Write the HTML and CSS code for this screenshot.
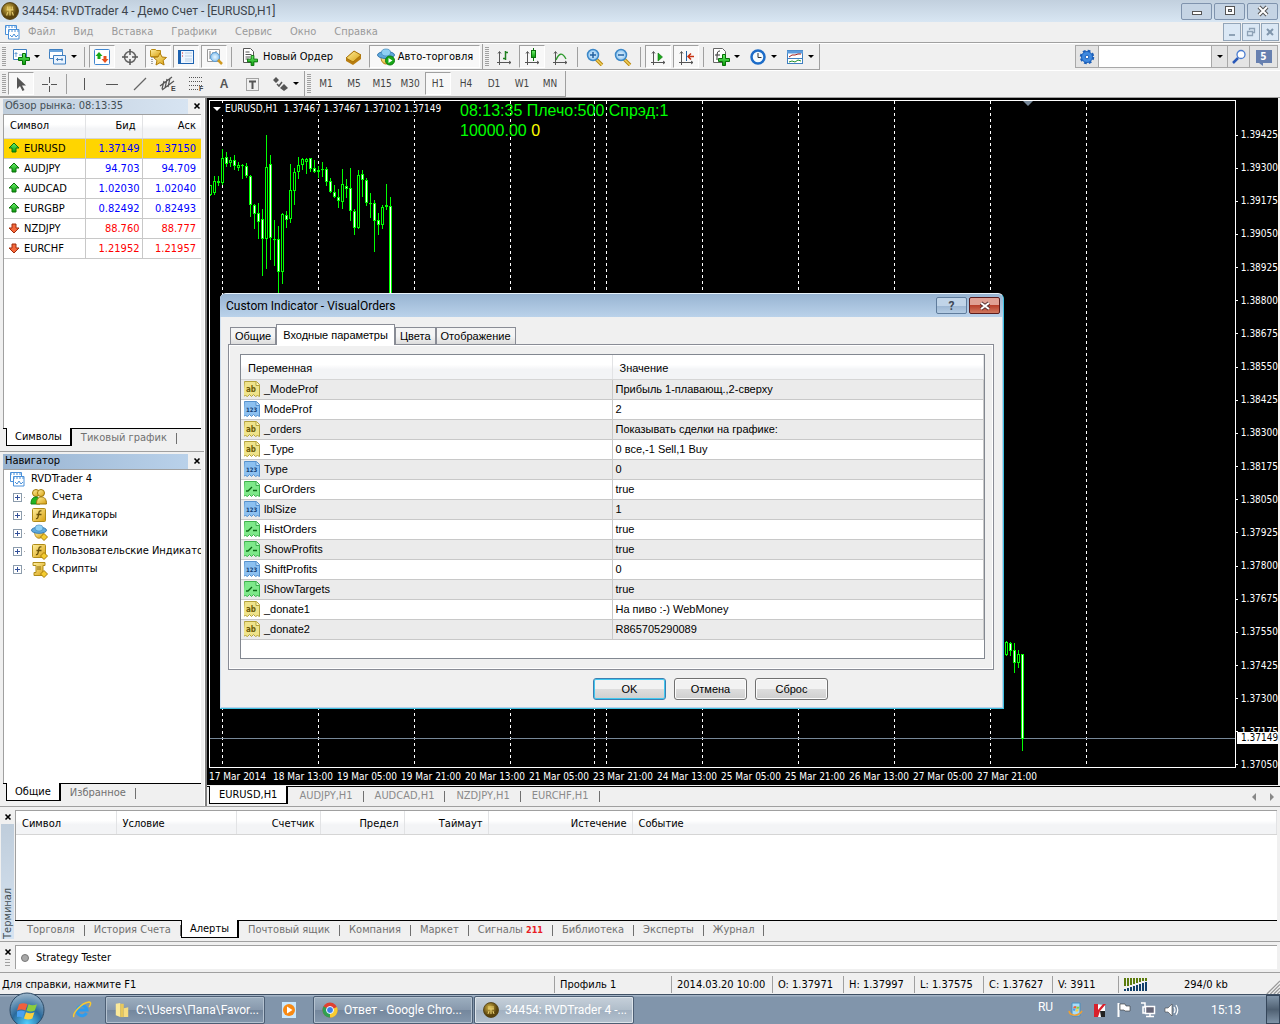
FILE: index.html
```html
<!DOCTYPE html>
<html lang="ru">
<head>
<meta charset="utf-8">
<title>34454: RVDTrader 4 - Демо Счет - [EURUSD,H1]</title>
<link rel="stylesheet" href="styles.css">
</head>
<body>
<svg class="defs" aria-hidden="true">
  <defs>
    <linearGradient id="gGreen" x1="0" y1="0" x2="0" y2="1"><stop offset="0" stop-color="#6df06d"/><stop offset="1" stop-color="#0a9a0a"/></linearGradient>
    <linearGradient id="gGold" x1="0" y1="0" x2="1" y2="1"><stop offset="0" stop-color="#fff0a0"/><stop offset="1" stop-color="#d8a010"/></linearGradient>
    <radialGradient id="gLens"><stop offset="0" stop-color="#e8f6ff"/><stop offset="1" stop-color="#8cc4f0"/></radialGradient>
    <radialGradient id="gCoin" cx=".4" cy=".35"><stop offset="0" stop-color="#d8b84a"/><stop offset="1" stop-color="#5a430c"/></radialGradient>
    <radialGradient id="gOrb" cx=".5" cy=".9" r=".9"><stop offset="0" stop-color="#4fd0ff"/><stop offset=".5" stop-color="#2a6a9c"/><stop offset="1" stop-color="#9fb8cc"/></radialGradient>
  </defs>
  <symbol id="coin" viewBox="0 0 16 16"><circle cx="8" cy="8" r="7.500" fill="url(#gCoin)" stroke="#4d3a0c" stroke-width=".8"/><path d="M6 4v3M10 4v3M5 7h6M8 4v8M6 9l-1 3M10 9l1 3" stroke="#e8cf70" fill="none"/></symbol>
  <symbol id="charts" viewBox="0 0 16 16"><path d="M1.500 1.500h11v9h-11z" fill="#fff" stroke="#4a90d9"/><path d="M1 3h12" stroke="#4a90d9" stroke-dasharray="2 1"/><path d="M4.500 5.500h10.500v9.500H4.500z" fill="#fff" stroke="#4a90d9"/><path d="M4 7h11" stroke="#4a90d9" stroke-dasharray="2 1"/><path d="M6 11l2 2 2-3 2 3 2-2" fill="none" stroke="#4a90d9"/></symbol>
  <symbol id="plus" viewBox="0 0 12 12"><path d="M4.500.5h3v4h4v3h-4v4h-3v-4h-4v-3h4z" fill="url(#gGreen)" stroke="#067006"/></symbol>
  <symbol id="newchart" viewBox="0 0 20 18"><path d="M2.500 1.500h13v10h-13z" fill="#fff" stroke="#3f7fc0"/><path d="M5 4v5M3.500 5.500h3M8 7h5" stroke="#6a9fd4"/><use href="#plus" x="7" y="5" width="12" height="12"/></symbol>
  <symbol id="profiles" viewBox="0 0 20 18"><path d="M1.500 1.500h13v9h-13z" fill="#fff" stroke="#3f7fc0"/><path d="M1.500 3h13" stroke="#6aa4dc" stroke-width="2"/><path d="M5.500 7.500h12v8.500h-12z" fill="#eaf4ff" stroke="#3f7fc0"/><path d="M8 11.500h7M9.500 10v3M14 10v3" stroke="#4a80b8"/></symbol>
  <symbol id="watch" viewBox="0 0 20 18"><rect x="2.500" y="1.500" width="15" height="15" rx="1" fill="#fff" stroke="#3f86d0"/><path d="M7 4l3.500 4H8.500v3H5.500V8H3.500z" fill="#17a817"/><path d="M13 15l-3.500-4h2V8h3v3h2z" fill="#e8501c"/></symbol>
  <symbol id="target" viewBox="0 0 20 18"><circle cx="10" cy="9" r="5.500" fill="none" stroke="#666" stroke-width="1.500"/><path d="M10 1v6M10 11v6M2 9h6M12 9h6" stroke="#555" stroke-width="1.500"/></symbol>
  <symbol id="navstar" viewBox="0 0 20 18"><path d="M2.500 2.500l1-1h4l1 1h4v6h-10z" fill="url(#gGold)" stroke="#b88a10"/><path d="M12 5l2 4 4.500.5-3.400 3 1 4.500-4.100-2.300L8 17l1-4.500-3.500-3L10 9z" fill="url(#gGold)" stroke="#b07c08"/><path d="M4 9v7" stroke="#555" stroke-dasharray="1 1"/></symbol>
  <symbol id="term" viewBox="0 0 20 18"><rect x="2.500" y="2.500" width="15" height="13" fill="#eef6ff" stroke="#1d62b0"/><path d="M4 3v12" stroke="#1d62b0" stroke-width="2"/><path d="M6 5h1M6 8h1" stroke="#e02020"/><path d="M9 5h7M9 8h7M9 11h7M9 13h7" stroke="#bcd0e4"/></symbol>
  <symbol id="tester" viewBox="0 0 20 18"><path d="M3.500 1.500h12v12h-12z" fill="#fff" stroke="#999"/><path d="M6 3v8M9 4v6M12 3v4" stroke="#777"/><circle cx="11" cy="9" r="4.500" fill="url(#gLens)" stroke="#5a9bd4"/><path d="M14 12l4 4" stroke="#d09a20" stroke-width="2.500"/></symbol>
  <symbol id="neworder" viewBox="0 0 20 18"><path d="M2.500.5h7l3 3v11h-10z" fill="#fff" stroke="#555"/><path d="M4.500 4h4M4.500 6.500h6M4.500 9h5M4.500 11h3" stroke="#555"/><use href="#plus" x="6" y="7" width="11" height="11"/></symbol>
  <symbol id="goldbook" viewBox="0 0 20 18"><path d="M2 10l8-7 7 4v4l-8 6-7-4z" fill="#b87d10"/><path d="M2 10l8-7 7 4-8 7z" fill="url(#gGold)" stroke="#a87208"/></symbol>
  <symbol id="expert" viewBox="0 0 20 18"><path d="M5 9c0 4 2 7 5 7s5-3 5-7z" fill="url(#gGold)" stroke="#b08010"/><ellipse cx="10" cy="7" rx="8.500" ry="3.500" fill="#5fa9dc" stroke="#3478b0"/><ellipse cx="10" cy="4.500" rx="4.500" ry="3.500" fill="#8fd0f4" stroke="#3f88bc" stroke-width=".7"/></symbol>
  <symbol id="auto" viewBox="0 0 20 18"><use href="#expert" width="20" height="18"/><circle cx="14" cy="12.500" r="4.500" fill="#18a818" stroke="#0c7c0c"/><path d="M12.500 10v5l4-2.500z" fill="#fff"/></symbol>
  <symbol id="axes" viewBox="0 0 20 18"><path d="M5.500 4v13M3 14.500h14M4 5.500l1.500-2 1.500 2M15 13l2 1.500-2 1.500" fill="none" stroke="#555"/></symbol>
  <symbol id="bars" viewBox="0 0 20 18"><use href="#axes" width="20" height="18"/><path d="M11.500 3v9M9 10.500h2.500M11.500 4.500H14" stroke="#1f7f1f" stroke-width="1.500"/></symbol>
  <symbol id="candle" viewBox="0 0 20 18"><use href="#axes" width="20" height="18"/><path d="M11.500 0v13" stroke="#0a700a"/><rect x="9.500" y="2.500" width="4" height="7" fill="url(#gGreen)" stroke="#0a700a"/></symbol>
  <symbol id="line" viewBox="0 0 20 18"><use href="#axes" width="20" height="18"/><path d="M6 12c3-7 6-8 10-1" fill="none" stroke="#2c9a2c" stroke-width="1.300"/></symbol>
  <symbol id="lens" viewBox="0 0 20 18"><path d="M11 11l6 6" stroke="#b8860b" stroke-width="3.500"/><path d="M11 11l6 6" stroke="#f0d060" stroke-width="1.500"/><circle cx="8" cy="7" r="5.500" fill="url(#gLens)" stroke="#3c88c8" stroke-width="1.500"/></symbol>
  <symbol id="zoomin" viewBox="0 0 20 18"><use href="#lens" width="20" height="18"/><path d="M5 7h6M8 4v6" stroke="#2060a0" stroke-width="1.500"/></symbol>
  <symbol id="zoomout" viewBox="0 0 20 18"><use href="#lens" width="20" height="18"/><path d="M5 7h6" stroke="#2060a0" stroke-width="1.500"/></symbol>
  <symbol id="scroll" viewBox="0 0 20 18"><use href="#axes" width="20" height="18"/><path d="M10 5v8l4.500-4z" fill="#1ca81c" stroke="#0a700a" stroke-width=".6"/></symbol>
  <symbol id="shift" viewBox="0 0 20 18"><use href="#axes" width="20" height="18"/><path d="M10.500 3v10" stroke="#2060a0"/><path d="M12 8.500h6M15 5.500l-3 3 3 3" fill="none" stroke="#c83010" stroke-width="1.500"/></symbol>
  <symbol id="indic" viewBox="0 0 20 18"><path d="M2.500.5h9l3 3v11h-12z" fill="#fff" stroke="#666"/><path d="M9 3c-3 0-3 2-3 9M4 7h5" fill="none" stroke="#333"/><use href="#plus" x="7" y="6" width="12" height="12"/></symbol>
  <symbol id="clock" viewBox="0 0 20 18"><circle cx="10" cy="9" r="6.500" fill="#f4fbff" stroke="#1c6cc8" stroke-width="2.500"/><path d="M10 5v4.500h3.500" fill="none" stroke="#333"/></symbol>
  <symbol id="templ" viewBox="0 0 20 18"><rect x="2.500" y="2.500" width="15" height="13" fill="#fff" stroke="#3f7fc0"/><path d="M2 4h16" stroke="#5c9cdc" stroke-width="3"/><path d="M4 9l3-2h3l3-1h3" fill="none" stroke="#a02020"/><path d="M2 10.500h16" stroke="#3f7fc0"/><path d="M4 14l3-1 3 1 3-2 3 1" fill="none" stroke="#20902c"/></symbol>
  <symbol id="cursor" viewBox="0 0 20 18"><path d="M6 2v12l3-3 2.500 5 2-1-2.500-4.500h4z" fill="#555"/></symbol>
  <symbol id="cross" viewBox="0 0 20 18"><path d="M10.500 2v6M10.500 11v6M3 9.500h6M12 9.500h6" stroke="#555"/></symbol>
  <symbol id="vline" viewBox="0 0 20 18"><path d="M10.500 3v12" stroke="#555"/></symbol>
  <symbol id="hline" viewBox="0 0 20 18"><path d="M4 9.500h12" stroke="#555"/></symbol>
  <symbol id="trend" viewBox="0 0 20 18"><path d="M4 15L16 3" stroke="#666" stroke-width="1.200"/></symbol>
  <symbol id="channel" viewBox="0 0 20 18"><path d="M2 11L14 2M4 15L16 6M6 6l-2 8M9 4L7 13M12 3l-2 9" stroke="#555" stroke-width="1.200"/><text x="13" y="16" class="icon-letter">E</text></symbol>
  <symbol id="fibo" viewBox="0 0 20 18"><path d="M3 2.500h14M3 6.500h14M3 10.500h14M3 14.500h9" stroke="#555" stroke-dasharray="1 1"/><text x="13" y="16" class="icon-letter">F</text></symbol>
  <symbol id="label" viewBox="0 0 20 18"><rect x="4.500" y="3.500" width="12" height="12" fill="none" stroke="#555" stroke-dasharray="1 1"/><path d="M7 6.500h7M10.500 6v8" stroke="#555" stroke-width="2"/></symbol>
  <symbol id="arrows" viewBox="0 0 20 18"><path d="M3 5l3-3 3 3-3 3zM10 13l4-4 4 4-4 3z" fill="#555"/><path d="M7 9l2 2 3-4" fill="none" stroke="#555" stroke-width="1.500"/></symbol>
  <symbol id="gear" viewBox="0 0 16 16"><circle cx="8" cy="8" r="6" fill="none" stroke="#1c5fb8" stroke-width="2.500" stroke-dasharray="2.700 2"/><circle cx="8" cy="8" r="5.500" fill="#3f8ae0" stroke="#1c5fb8"/><circle cx="8" cy="8" r="1.800" fill="#fff" stroke="#1c5fb8"/></symbol>
  <symbol id="find" viewBox="0 0 16 16"><circle cx="10" cy="5.500" r="4" fill="#fff" stroke="#4a7cd0" stroke-width="1.300"/><path d="M7 9l-5 5" stroke="#2858b8" stroke-width="2.500"/></symbol>
  <symbol id="up" viewBox="0 0 12 12"><path d="M6 1l5 5H8v4H4V6H1z" fill="url(#gGreen)" stroke="#0a700a"/></symbol>
  <symbol id="down" viewBox="0 0 12 12"><path d="M6 11L1 6h3V2h4v4h3z" fill="#f4683c" stroke="#a02c0c"/></symbol>
  <symbol id="x" viewBox="0 0 8 8"><path d="M1.500 1.500l5 5M6.500 1.500l-5 5" stroke="#000" stroke-width="1.600"/></symbol>
  <symbol id="users" viewBox="0 0 18 18"><circle cx="6" cy="5" r="3.500" fill="url(#gGold)" stroke="#a07808"/><path d="M1 16c0-5 2-7 5-7s4 2 4 7z" fill="#22b422" stroke="#108010"/><circle cx="11" cy="5" r="3.500" fill="url(#gGold)" stroke="#a07808"/><path d="M6.500 16c0-5 2-7 5-7s5 2 5 7z" fill="url(#gGold)" stroke="#a07808"/></symbol>
  <symbol id="func" viewBox="0 0 18 18"><rect x="2.500" y="2.500" width="13" height="13" rx="1" fill="url(#gGold)" stroke="#b08c18"/><path d="M11.500 5c-3-1-2.500 2-3 4s-.5 4-2.500 3.500M6.500 8.500h5" fill="none" stroke="#6a5208" stroke-width="1.300"/></symbol>
  <symbol id="gem" viewBox="0 0 8 8"><path d="M4 .5L7.500 4 4 7.500.5 4z" fill="#f4cc30" stroke="#a87c08"/></symbol>
  <symbol id="advisor" viewBox="0 0 18 18"><use href="#expert" width="18" height="16"/><use href="#gem" x="10" y="9" width="8" height="8"/></symbol>
  <symbol id="funcc" viewBox="0 0 18 18"><use href="#func" width="18" height="18"/><use href="#gem" x="10" y="10" width="8" height="8"/></symbol>
  <symbol id="script" viewBox="0 0 18 18"><path d="M3 2.500h12v3h-2v7h2v3H4v-3h2v-7H3z" fill="url(#gGold)" stroke="#b08c18"/><path d="M7 7h4M7 9h4" stroke="#8a6c10"/><use href="#gem" x="10" y="10" width="8" height="8"/></symbol>
  <symbol id="pab" viewBox="0 0 16 16"><path d="M.5.500h12l3 3v12l-2-1-2 1-2-2-2 2-2-2-2 2-2-1-3 1z" fill="#efe38a" stroke="#b4a23c"/><path d="M12 .5v4h3.500" fill="#fff8c0" stroke="#b4a23c"/><text x="2" y="11" class="par-letter par-ab">ab</text></symbol>
  <symbol id="p123" viewBox="0 0 16 16"><path d="M.5.500h12l3 3v12l-2-1-2 1-2-2-2 2-2-2-2 2-2-1-3 1z" fill="#8cc0f0" stroke="#5590cc"/><path d="M12 .5v4h3.500" fill="#c8e4ff" stroke="#5590cc"/><text x="2" y="11" class="par-letter par-num">123</text></symbol>
  <symbol id="pbool" viewBox="0 0 16 16"><path d="M.5.500h12l3 3v12l-2-1-2 1-2-2-2 2-2-2-2 2-2-1-3 1z" fill="#7ee88a" stroke="#3cb04c"/><path d="M12 .5v4h3.500" fill="#c8ffd0" stroke="#3cb04c"/><path d="M2 10h2l4-4M9 9.500h4" fill="none" stroke="#0c6c18" stroke-width="1.300"/></symbol>
  <symbol id="flag" viewBox="0 0 10 10"><path d="M1 2q2-1 4 0l-1 3q-2-1-4 0z" fill="#f0603c"/><path d="M5.500 2q2 1 4 0l-1 3q-2 1-4 0z" fill="#8ccc3c"/><path d="M0 5.500q2-1 3.800 0l-1 3q-1.800-1-3.800 0z" fill="#4aa0f0"/><path d="M4.300 5.800q2 1 4 0l-1 3q-2 1-4 0z" fill="#fcd03c"/></symbol>
</svg>

<header class="titlebar">
  <svg class="i18"><use href="#coin"/></svg>
  <h1>34454: RVDTrader 4 - Демо Счет - [EURUSD,H1]</h1>
  <div class="winbtns">
    <button aria-label="Свернуть"><svg viewBox="0 0 12 12"><rect x="1.500" y="6.500" width="9" height="3" fill="#fff" stroke="#555"/></svg></button>
    <button aria-label="Развернуть"><svg viewBox="0 0 12 12"><rect x="1.500" y="1.500" width="9" height="8" fill="#fff" stroke="#555"/><rect x="4.500" y="4.500" width="3" height="2" fill="#b8c8d8" stroke="#555"/></svg></button>
    <button aria-label="Закрыть"><svg viewBox="0 0 12 12"><path d="M2 2l8 8M10 2l-8 8" stroke="#555" stroke-width="4"/><path d="M2 2l8 8M10 2l-8 8" stroke="#fff" stroke-width="2"/></svg></button>
  </div>
</header>

<nav class="menubar">
  <svg class="i16"><use href="#charts"/></svg>
  <button>Файл</button><button>Вид</button><button>Вставка</button><button>Графики</button><button>Сервис</button><button>Окно</button><button>Справка</button>
  <div class="mdibtns">
    <button aria-label="Свернуть окно"><svg viewBox="0 0 10 10"><path d="M2 8h6" stroke="#8ea2b6" stroke-width="2"/></svg></button>
    <button aria-label="Восстановить окно"><svg viewBox="0 0 10 10"><path d="M3.500 3V1.500h5v4H7M1.500 4.500h5v4h-5z" fill="none" stroke="#8ea2b6" stroke-width="1.300"/></svg></button>
    <button aria-label="Закрыть окно"><svg viewBox="0 0 10 10"><path d="M2 2l6 6M8 2L2 8" stroke="#8096ac" stroke-width="2"/></svg></button>
  </div>
</nav>

<div class="toolrow">
  <div class="toolbar">
    <i class="grip"></i>
    <button class="tb drop" aria-label="Новый график"><svg><use href="#newchart"/></svg></button>
    <button class="tb drop" aria-label="Профили"><svg><use href="#profiles"/></svg></button>
    <i class="sep"></i>
    <button class="tb on" aria-label="Обзор рынка"><svg><use href="#watch"/></svg></button>
    <button class="tb" aria-label="Окно данных"><svg><use href="#target"/></svg></button>
    <button class="tb on" aria-label="Навигатор"><svg><use href="#navstar"/></svg></button>
    <button class="tb on" aria-label="Терминал"><svg><use href="#term"/></svg></button>
    <button class="tb on" aria-label="Тестер стратегий"><svg><use href="#tester"/></svg></button>
    <i class="sep"></i>
    <button class="tb order"><svg><use href="#neworder"/></svg>Новый Ордер</button>
    <button class="tb" aria-label="MetaEditor"><svg><use href="#goldbook"/></svg></button>
    <button class="tb on autotrade"><svg><use href="#auto"/></svg>Авто-торговля</button>
  </div>
  <div class="toolbar">
    <i class="grip"></i>
    <button class="tb" aria-label="Бары"><svg><use href="#bars"/></svg></button>
    <button class="tb on" aria-label="Свечи"><svg><use href="#candle"/></svg></button>
    <button class="tb" aria-label="Линия"><svg><use href="#line"/></svg></button>
    <i class="sep"></i>
    <button class="tb" aria-label="Увеличить"><svg><use href="#zoomin"/></svg></button>
    <button class="tb" aria-label="Уменьшить"><svg><use href="#zoomout"/></svg></button>
    <i class="sep"></i>
    <button class="tb on" aria-label="Автопрокрутка"><svg><use href="#scroll"/></svg></button>
    <button class="tb on" aria-label="Сдвиг графика"><svg><use href="#shift"/></svg></button>
    <i class="sep"></i>
    <button class="tb drop" aria-label="Индикаторы"><svg><use href="#indic"/></svg></button>
    <button class="tb drop" aria-label="Периоды"><svg><use href="#clock"/></svg></button>
    <button class="tb drop" aria-label="Шаблоны"><svg><use href="#templ"/></svg></button>
  </div>
  <form class="search">
    <button type="button" aria-label="Настройки"><svg class="i16"><use href="#gear"/></svg></button>
    <input type="text" aria-label="Поиск">
    <button type="button" class="arrow" aria-label="История поиска"></button>
    <button type="button" aria-label="Найти"><svg class="i16"><use href="#find"/></svg></button>
    <button type="button" class="msgs" aria-label="Сообщения"><span>5</span></button>
  </form>
</div>

<div class="toolrow">
  <div class="toolbar">
    <i class="grip"></i>
    <button class="tb on" aria-label="Курсор"><svg><use href="#cursor"/></svg></button>
    <button class="tb" aria-label="Перекрестие"><svg><use href="#cross"/></svg></button>
    <i class="sep"></i>
    <button class="tb" aria-label="Вертикальная линия"><svg><use href="#vline"/></svg></button>
    <button class="tb" aria-label="Горизонтальная линия"><svg><use href="#hline"/></svg></button>
    <button class="tb" aria-label="Трендовая линия"><svg><use href="#trend"/></svg></button>
    <button class="tb" aria-label="Канал"><svg><use href="#channel"/></svg></button>
    <button class="tb" aria-label="Фибоначчи"><svg><use href="#fibo"/></svg></button>
    <button class="tb letter">A</button>
    <button class="tb" aria-label="Метка"><svg><use href="#label"/></svg></button>
    <button class="tb drop" aria-label="Стрелки"><svg><use href="#arrows"/></svg></button>
  </div>
  <div class="toolbar periods">
    <i class="grip"></i>
    <button class="tb">M1</button><button class="tb">M5</button><button class="tb">M15</button><button class="tb">M30</button><button class="tb on">H1</button><button class="tb">H4</button><button class="tb">D1</button><button class="tb">W1</button><button class="tb">MN</button>
  </div>
</div>

<main class="workspace">
  <aside class="sidebar">
    <section class="panel market">
      <header class="caption idle"><h2>Обзор рынка: 08:13:35</h2><button class="close" aria-label="Закрыть"><svg><use href="#x"/></svg></button></header>
      <div class="panel-body">
        <table class="quotes">
          <colgroup><col class="c-sym"><col class="c-bid"><col></colgroup>
          <thead><tr><th>Символ</th><th>Бид</th><th>Аск</th></tr></thead>
          <tbody>
            <tr class="sel"><td><svg><use href="#up"/></svg>EURUSD</td><td>1.37149</td><td>1.37150</td></tr>
            <tr><td><svg><use href="#up"/></svg>AUDJPY</td><td>94.703</td><td>94.709</td></tr>
            <tr><td><svg><use href="#up"/></svg>AUDCAD</td><td>1.02030</td><td>1.02040</td></tr>
            <tr><td><svg><use href="#up"/></svg>EURGBP</td><td>0.82492</td><td>0.82493</td></tr>
            <tr class="fall"><td><svg><use href="#down"/></svg>NZDJPY</td><td>88.760</td><td>88.777</td></tr>
            <tr class="fall"><td><svg><use href="#down"/></svg>EURCHF</td><td>1.21952</td><td>1.21957</td></tr>
          </tbody>
        </table>
      </div>
      <div class="tabs"><button class="active">Символы</button><button>Тиковый график</button></div>
    </section>
    <section class="panel navigator">
      <header class="caption"><h2>Навигатор</h2><button class="close" aria-label="Закрыть"><svg><use href="#x"/></svg></button></header>
      <div class="panel-body">
        <ul class="tree">
          <li class="root"><svg><use href="#charts"/></svg>RVDTrader 4</li>
          <li><b></b><svg><use href="#users"/></svg>Счета</li>
          <li><b></b><svg><use href="#func"/></svg>Индикаторы</li>
          <li><b></b><svg><use href="#advisor"/></svg>Советники</li>
          <li><b></b><svg><use href="#funcc"/></svg>Пользовательские Индикаторы</li>
          <li><b></b><svg><use href="#script"/></svg>Скрипты</li>
        </ul>
      </div>
      <div class="tabs"><button class="active">Общие</button><button>Избранное</button></div>
    </section>
  </aside>

  <section class="chart-window">
    <div class="chart">
      <div class="plot">
        <svg class="candles" aria-label="EURUSD,H1"></svg>
        <p class="ohlc"><i></i>EURUSD,H1&nbsp; 1.37467 1.37467 1.37102 1.37149</p>
        <p class="account">08:13:35 Плечо:500 Спрэд:1<br>10000.00 <em>0</em></p>
      </div>
      <ol class="prices">
        <li>1.39425</li><li>1.39300</li><li>1.39175</li><li>1.39050</li><li>1.38925</li><li>1.38800</li><li>1.38675</li><li>1.38550</li><li>1.38425</li><li>1.38300</li><li>1.38175</li><li>1.38050</li><li>1.37925</li><li>1.37800</li><li>1.37675</li><li>1.37550</li><li>1.37425</li><li>1.37300</li><li>1.37175</li><li>1.37050</li>
      </ol>
      <ol class="times">
        <li>17 Mar 2014</li><li>18 Mar 13:00</li><li>19 Mar 05:00</li><li>19 Mar 21:00</li><li>20 Mar 13:00</li><li>21 Mar 05:00</li><li>23 Mar 21:00</li><li>24 Mar 13:00</li><li>25 Mar 05:00</li><li>25 Mar 21:00</li><li>26 Mar 13:00</li><li>27 Mar 05:00</li><li>27 Mar 21:00</li>
      </ol>
      <span class="last-price">1.37149</span>
    </div>
    <div class="tabs chart-tabs"><button class="active">EURUSD,H1</button><button>AUDJPY,H1</button><button>AUDCAD,H1</button><button>NZDJPY,H1</button><button>EURCHF,H1</button><span class="scrollers"><button aria-label="Назад" class="prev"></button><button aria-label="Вперед" class="next"></button></span></div>
  </section>
</main>

<section class="terminal">
  <div class="rail"><button class="close" aria-label="Закрыть"><svg><use href="#x"/></svg></button><h2>Терминал</h2></div>
  <div class="terminal-main">
    <div class="terminal-body">
      <table class="alerts">
        <colgroup><col class="w100"><col class="w120"><col class="w84"><col class="w84"><col class="w84"><col class="w144"><col></colgroup>
        <thead><tr><th>Символ</th><th>Условие</th><th class="r">Счетчик</th><th class="r">Предел</th><th class="r">Таймаут</th><th class="r">Истечение</th><th>Событие</th></tr></thead>
      </table>
    </div>
    <div class="tabs"><button>Торговля</button><button>История Счета</button><button class="active">Алерты</button><button>Почтовый ящик</button><button>Компания</button><button>Маркет</button><button>Сигналы <small>211</small></button><button>Библиотека</button><button>Эксперты</button><button>Журнал</button></div>
  </div>
</section>

<section class="tester">
  <div class="rail"><button class="close" aria-label="Закрыть"><svg><use href="#x"/></svg></button><i></i></div>
  <h2><span class="dot"></span>Strategy Tester</h2>
</section>

<footer class="status">
  <span class="help">Для справки, нажмите F1</span>
  <span class="s-profile">Профиль 1</span><span class="s-time">2014.03.20 10:00</span><span class="s-o">O: 1.37971</span><span class="s-o">H: 1.37997</span><span class="s-l">L: 1.37575</span><span class="s-l">C: 1.37627</span><span class="s-v">V: 3911</span>
  <span class="traffic"><svg viewBox="0 0 24 13"><path d="M1 0v8M4 0v8M7 0v7M10 0v6M13 0v5M16 0v4M19 0v3M22 0v3" stroke="#5c7c0c" stroke-width="2"/><path d="M1 11v2M4 10v3M7 9v4M10 8v5M13 7v6M16 6v7M19 5v8M22 4v9" stroke="#12406a" stroke-width="2"/></svg>294/0 kb</span>
  <svg class="sizer" viewBox="0 0 16 16"><path d="M1 16L16 1M5 16L16 5M9 16l7-7M13 16l3-3" stroke="#999" stroke-width="1.500"/></svg>
</footer>

<footer class="taskbar">
  <button class="start" aria-label="Пуск"><svg viewBox="0 0 36 36"><circle cx="18" cy="18" r="17" fill="url(#gOrb)" stroke="#2c4a66"/><use href="#flag" x="8" y="8" width="21" height="21"/></svg></button>
  <button class="quick ie" aria-label="Internet Explorer"><svg viewBox="0 0 20 20"><path d="M14.500 13a5 5 0 1 1 .5-3H6" fill="none" stroke="#2c9cf0" stroke-width="3"/><path d="M2 17C0 14 9 3 17 2c3 0 1 4 0 5" fill="none" stroke="#f8c830" stroke-width="1.500"/></svg></button>
  <button class="task"><svg class="i16" viewBox="0 0 16 18"><path d="M1 2l5-1v16l-5-2z" fill="#fbe99a"/><path d="M6 2h4v15H6z" fill="#e8c85c"/><path d="M10 7l5-1v11h-5z" fill="#f6dc80"/></svg>C:\Users\Папа\Favor...</button>
  <button class="quick media" aria-label="Проигрыватель"><svg viewBox="0 0 20 20"><path d="M3 2h14v16H3z" fill="#c8e8ff"/><circle cx="10" cy="10" r="6" fill="#f88a14"/><path d="M8 6.500v7l5.500-3.500z" fill="#fff"/></svg></button>
  <button class="task"><svg class="i16" viewBox="0 0 16 16"><circle cx="8" cy="8" r="7.500" fill="#e04030"/><path d="M8 8L1.500 4.300A7.500 7.500 0 0 0 8 15.500z" fill="#30a050"/><path d="M8 8l7-3a7.500 7.500 0 0 1-7 10.500z" fill="#f8cc30"/><circle cx="8" cy="8" r="3.500" fill="#3c80e8" stroke="#fff"/></svg>Ответ - Google Chro...</button>
  <button class="task current"><svg class="i16"><use href="#coin"/></svg>34454: RVDTrader 4 -...</button>
  <div class="tray">
    <span class="lang">RU</span>
    <svg viewBox="0 0 16 16"><path d="M4 1h8v13H4z" fill="#a8dcf8" stroke="#4890c0"/><use href="#flag" x="5" y="3" width="7" height="7"/><path d="M1 9c1 5 9 6 13 0" fill="none" stroke="#f0a030" stroke-width="1.500"/></svg>
    <svg viewBox="0 0 16 16"><path d="M2 2l11 1v12H2z" fill="#fff"/><path d="M2 2h4v6l5-6h3L8 9l-2 6H2z" fill="#d8202c"/><path d="M8 9h5v6H9z" fill="#222"/></svg>
    <svg viewBox="0 0 16 16"><path d="M2.500 1v14" stroke="#fff" stroke-width="2"/><path d="M4 2h5l1 2h4v5H9L8 8H4z" fill="#fff" stroke="#333" stroke-width=".6"/></svg>
    <svg viewBox="0 0 16 16"><path d="M5.500 4.500h9v7h-9zM10 12v2M6 14.500h8" fill="#667" stroke="#fff" stroke-width="1.500"/><path d="M1 1h4v4H3v6h2" fill="none" stroke="#fff" stroke-width="1.500"/></svg>
    <svg viewBox="0 0 16 16"><path d="M1 6h3l4-4v12l-4-4H1z" fill="#fff" stroke="#444" stroke-width=".6"/><path d="M10 5q2 3 0 6M12 3q3.500 5 0 10" fill="none" stroke="#fff" stroke-width="1.200"/></svg>
    <time>15:13</time>
  </div>
  <button class="desktop" aria-label="Показать рабочий стол"></button>
</footer>

<div class="dialog" role="dialog" aria-label="Custom Indicator - VisualOrders">
  <header><h2>Custom Indicator - VisualOrders</h2>
    <button class="d-help" aria-label="Справка">?</button>
    <button class="d-close" aria-label="Закрыть"><svg viewBox="0 0 12 12"><path d="M2 3l8 6M10 3l-8 6" stroke="#5a3030" stroke-width="4"/><path d="M2 3l8 6M10 3l-8 6" stroke="#fff" stroke-width="2"/></svg></button>
  </header>
  <div class="d-tabs"><button>Общие</button><button class="active">Входные параметры</button><button>Цвета</button><button>Отображение</button></div>
  <div class="d-page">
    <div class="d-list">
      <table>
        <colgroup><col class="w371"><col></colgroup>
        <thead><tr><th>Переменная</th><th>Значение</th></tr></thead>
        <tbody>
          <tr><td><svg><use href="#pab"/></svg>_ModeProf</td><td>Прибыль 1-плавающ.,2-сверху</td></tr>
          <tr><td><svg><use href="#p123"/></svg>ModeProf</td><td>2</td></tr>
          <tr><td><svg><use href="#pab"/></svg>_orders</td><td>Показывать сделки на графике:</td></tr>
          <tr><td><svg><use href="#pab"/></svg>_Type</td><td>0 все,-1 Sell,1 Buy</td></tr>
          <tr><td><svg><use href="#p123"/></svg>Type</td><td>0</td></tr>
          <tr><td><svg><use href="#pbool"/></svg>CurOrders</td><td>true</td></tr>
          <tr><td><svg><use href="#p123"/></svg>lblSize</td><td>1</td></tr>
          <tr><td><svg><use href="#pbool"/></svg>HistOrders</td><td>true</td></tr>
          <tr><td><svg><use href="#pbool"/></svg>ShowProfits</td><td>true</td></tr>
          <tr><td><svg><use href="#p123"/></svg>ShiftProfits</td><td>0</td></tr>
          <tr><td><svg><use href="#pbool"/></svg>lShowTargets</td><td>true</td></tr>
          <tr><td><svg><use href="#pab"/></svg>_donate1</td><td>На пиво :-) WebMoney</td></tr>
          <tr><td><svg><use href="#pab"/></svg>_donate2</td><td>R865705290089</td></tr>
        </tbody>
      </table>
    </div>
  </div>
  <div class="d-buttons"><button class="default">OK</button><button>Отмена</button><button>Сброс</button></div>
</div>
<script src="chart.js"></script>
</body>
</html>
```

FILE: styles.css
```css
* { box-sizing: border-box; }
body {
  margin: 0;
  min-height: 100vh;
  display: flex;
  flex-direction: column;
  position: relative;
  background: #f0f0f0;
  color: #000;
  font: 11px/14px "DejaVu Sans Condensed", "DejaVu Sans", sans-serif;
}
h1, h2, p, ul, ol { margin: 0; padding: 0; font: inherit; }
ul, ol { list-style: none; }
button { font: inherit; color: inherit; padding: 0; border: 0; background: none; white-space: nowrap; }
table { border-collapse: collapse; table-layout: fixed; width: 100%; }
th, td { font-weight: normal; padding: 0; white-space: nowrap; overflow: hidden; }
svg { display: block; flex: none; }
.defs { position: absolute; width: 0; height: 0; }
.i16 { width: 16px; height: 16px; }
.i18 { width: 18px; height: 18px; }

.titlebar {
  display: flex;
  align-items: center;
  height: 22px;
  padding: 0 2px 0 1px;
  gap: 3px;
  background: linear-gradient(#c2d0de, #d8e6f3);
  color: #3c444c;
  font: 12px/16px Roboto, sans-serif;
}
.titlebar h1 { flex: 1; }
.winbtns { display: flex; gap: 2px; }
.winbtns button {
  width: 31px;
  height: 17px;
  display: grid;
  place-items: center;
  border: 1px solid #7f93ad;
  border-radius: 2px;
  background: #c5d4e4;
}
.winbtns svg { width: 12px; height: 12px; }

.menubar {
  display: flex;
  align-items: center;
  height: 21px;
  padding: 0 1px 0 4px;
  border-bottom: 1px solid #a0a0a0;
  color: #9a9a9a;
}
.menubar > button { margin-left: 3px; padding: 0 5px; }
.menubar > button + button { margin-left: 8px; }
.mdibtns { display: flex; gap: 1px; margin-left: auto; }
.mdibtns button {
  width: 18px;
  height: 18px;
  display: grid;
  place-items: center;
  border: 1px solid #93a5b8;
  background: #dbe8f5;
}
.mdibtns svg { width: 10px; height: 10px; }

.toolrow { display: flex; height: 27px; border-top: 1px solid #fff; }
.toolbar {
  display: flex;
  align-items: center;
  gap: 2px;
  padding: 0 2px;
  border-right: 1px solid #a0a0a0;
  border-bottom: 1px solid #a0a0a0;
}
.grip {
  width: 4px;
  height: 20px;
  background: repeating-linear-gradient(#a0a0a0 0 1px, #f0f0f0 1px 2px);
}
.sep { width: 1px; height: 20px; margin: 0 2px; background: #a0a0a0; }
.tb {
  width: 26px;
  height: 23px;
  display: flex;
  align-items: center;
  justify-content: center;
  border: 1px solid transparent;
  flex: none;
}
.tb svg { width: 20px; height: 18px; }
.tb.on { border-color: #a0a0a0 #fff #fff #a0a0a0; background: #f8f8f8; }
.tb.drop { width: 35px; gap: 3px; }
.tb.drop::after, .arrow::after { content: ""; border: 3px solid transparent; border-top-color: #000; border-bottom: 0; }
.order, .autotrade { gap: 2px; font-size: 11px; }
.order { width: 103px; justify-content: flex-start; padding-left: 4px; }
.autotrade { width: 111px; }
.letter { font: bold 12px/16px "Liberation Sans", sans-serif; color: #555; }
.icon-letter { font: bold 7px "Liberation Sans", sans-serif; fill: #444; }
.periods { color: #444; font-size: 10px; }

.search {
  display: flex;
  width: 203px;
  height: 23px;
  margin: 1px 2px 0 auto;
  border: 1px solid #a8a8a8;
  background: #e4e4e4;
}
.search button { width: 22px; display: grid; place-items: center; border-left: 1px solid #a8a8a8; }
.search button:first-child { border-left: 0; }
.search input { flex: 1; min-width: 0; border: 0; border-left: 1px solid #a8a8a8; background: #fff; }
.search .arrow { width: 16px; }
.search .msgs { width: 28px; }
.msgs span { position: relative; width: 16px; height: 13px; background: #6780b0; color: #fff; font: bold 10px/13px "DejaVu Sans Condensed", sans-serif; }
.msgs span::after { content: ""; position: absolute; left: 3px; top: 13px; border: solid transparent; border-width: 3px 0 0 4px; border-top-color: #6780b0; }

.workspace { flex: 1; display: flex; min-height: 0; border-top: 1px solid #a0a0a0; }
.sidebar { width: 205px; flex: none; display: flex; flex-direction: column; border-right: 1px solid #fff; }
.panel { display: flex; flex-direction: column; padding: 1px 3px 4px; }
.market { height: 354px; border-bottom: 1px solid #a0a0a0; }
.navigator { flex: 1; padding-top: 2px; }
.caption { display: flex; height: 15px; }
.caption h2 { flex: 1; padding-left: 2px; background: linear-gradient(90deg, #99b4d1, #b9d1ea); }
.caption.idle h2 { background: linear-gradient(90deg, #bfcddb, #d7e4f2); color: #434e54; }
.close { width: 14px; height: 14px; display: grid; place-items: center; }
.caption .close { width: 13px; justify-items: end; }
.close svg { width: 8px; height: 8px; }
.panel-body { flex: 1; overflow: hidden; background: #fff; border-top: 1px solid #a0a0a0; border-left: 1px solid #a0a0a0; }
th { text-align: left; background: linear-gradient(#fff 40%, #f3f4f6 60%); border-right: 1px solid #e2e3e5; border-bottom: 1px solid #d5d5d5; }
.c-sym { width: 81px; }
.c-bid { width: 57px; }
.quotes th { height: 23px; padding: 0 6px; }
.quotes th + th, .quotes td + td { text-align: right; }
.quotes td { height: 20px; padding-top: 1px; border-right: 1px solid #c8c8c8; border-bottom: 1px solid #c8c8c8; }
.quotes td + td { padding-right: 2px; color: #00f; }
.quotes th:last-child, .quotes td:last-child { border-right: 0; padding-right: 5px; }
.quotes .fall td + td { color: #f00; }
.quotes .sel { background: #ffd500; }
.quotes td svg { display: inline-block; width: 12px; height: 12px; margin: 0 4px; vertical-align: -2px; }

.tabs { display: flex; height: 19px; color: #707070; padding-left: 3px; border-top: 1px solid #000; }
.tabs > button { position: relative; padding: 0 10px 0 9px; height: 18px; }
.tabs > button::after { content: ""; position: absolute; right: 0; top: 4px; height: 11px; border-right: 1px solid #707070; }
.tabs > button.active { margin-top: -1px; background: #fff; color: #000; border: solid #000; border-width: 0 2px 1px 1px; padding: 0 8px; }
.tabs > button.active::after { display: none; }

.tree li { display: flex; align-items: center; height: 18px; padding-left: 9px; white-space: nowrap; }
.tree .root { padding-left: 5px; gap: 6px; }
.tree svg { width: 18px; height: 18px; margin-right: 4px; }
.tree .root svg { width: 16px; height: 16px; margin-right: 0; }
.tree b {
  width: 9px;
  height: 9px;
  flex: none;
  margin-right: 8px;
  border: 1px solid #8c9cac;
  background: linear-gradient(#33509a, #33509a) center / 5px 1px no-repeat, linear-gradient(#33509a, #33509a) center / 1px 5px no-repeat, #fff;
  box-shadow: 7px 0 0 -4px #aaa;
}

.chart-window { flex: 1; min-width: 0; display: flex; flex-direction: column; border-left: 2px solid #808080; }
.chart {
  flex: 1;
  position: relative;
  display: grid;
  grid-template-columns: 1fr 42px;
  grid-template-rows: 1fr 17px;
  padding: 2px 0 0 2px;
  background: #000;
  color: #fff;
  font-size: 10px;
  line-height: 12px;
  border-right: 2px solid #f0f0f0;
}
.plot { position: relative; min-height: 300px; overflow: hidden; border: 1px solid #fff; }
.candles { position: absolute; width: 100%; height: 100%; }
.candles .grid { stroke: #fff; stroke-dasharray: 3 3; }
.candles .bid { stroke: #778899; }
.candles .bar { stroke: #0f0; fill: #000; }
.candles .bar.bear { fill: #fff; }
.candles .mark { fill: #778899; }
.ohlc { position: absolute; left: 3px; top: 2px; display: flex; align-items: center; gap: 4px; background: #000; }
.ohlc i { border: 4px solid transparent; border-top-color: #fff; border-bottom: 0; }
.account { position: absolute; left: 250px; top: 0; color: #0f0; font: 16px/20px "Liberation Sans", sans-serif; }
.account em { color: #ff0; font-style: normal; }
.prices { grid-column: 2; grid-row: 1 / 3; display: flex; flex-direction: column; justify-content: space-between; padding: 29px 0 14px; }
.prices li { display: flex; align-items: center; gap: 3px; }
.prices li::before { content: ""; width: 2px; height: 1px; background: #fff; }
.times { display: grid; grid-auto-flow: column; grid-auto-columns: 64px; justify-content: start; padding-top: 3px; white-space: nowrap; overflow: hidden; grid-column: 1; grid-row: 2; }
.last-price { position: absolute; right: 0; bottom: 41px; width: 41px; padding-left: 4px; background: #fff; color: #000; }
.chart-tabs { height: 20px; padding-left: 2px; color: #8a8a8a; margin-top: 1px; line-height: 18px; }
.chart-tabs > button { padding: 0 11px; }
.chart-tabs > button.active { padding: 0 9px; }
.scrollers { display: flex; gap: 14px; align-items: center; margin-left: auto; padding-right: 6px; }
.scrollers button { width: 0; height: 0; border: 4px solid transparent; }
.scrollers .prev { border-right-color: #888; border-left: 0; }
.scrollers .next { border-left-color: #888; border-right: 0; }

.terminal { display: flex; height: 136px; border-top: 1px solid #a0a0a0; border-bottom: 1px solid #a0a0a0; padding: 3px 3px 2px 0; }
.rail { width: 15px; display: flex; flex-direction: column; align-items: center; }
.terminal .rail h2 { flex: 1; width: 13px; writing-mode: vertical-rl; transform: rotate(180deg); line-height: 13px; background: linear-gradient(#d7e4f2, #bfcddb); color: #434e54; }
.terminal-main { flex: 1; display: flex; flex-direction: column; min-width: 0; }
.terminal-body { flex: 1; background: #fff; border-top: 1px solid #a0a0a0; border-left: 1px solid #a0a0a0; }
.alerts th { height: 23px; padding: 4px 6px 0; }
.alerts .r { text-align: right; padding-right: 5px; }
.w100 { width: 100px; }
.w120 { width: 120px; }
.w84 { width: 84px; }
.w144 { width: 144px; }
.w371 { width: 371px; }
.tabs small { color: #e81c24; font-size: 9px; font-weight: bold; }

.tester { display: flex; height: 31px; padding: 3px 3px 3px 0; border-bottom: 1px solid #a0a0a0; }
.tester .rail i { width: 5px; height: 8px; background: repeating-linear-gradient(#a0a0a0 0 1px, #f0f0f0 1px 3px); }
.tester h2 { flex: 1; display: flex; align-items: center; gap: 7px; padding-left: 5px; background: #fff; border-top: 1px solid #a0a0a0; border-left: 1px solid #a0a0a0; }
.dot { width: 8px; height: 8px; border-radius: 50%; background: #a8a8a8; border: 1px solid #787878; }

.status { display: flex; align-items: center; height: 21px; padding-top: 2px; position: relative; }
.status span { white-space: nowrap; line-height: 17px; }
.status .help { flex: 1; padding-left: 2px; }
.status span + span { border-left: 1px solid #a0a0a0; padding-left: 5px; }
.s-profile { width: 117px; }
.s-time { width: 101px; }
.s-o { width: 71px; }
.s-l { width: 69px; }
.s-v { width: 66px; }
.status .traffic { width: 162px; display: flex; align-items: center; gap: 36px; }
.traffic svg { width: 24px; height: 13px; }
.sizer { position: absolute; right: 0; bottom: 0; width: 14px; height: 14px; }

.taskbar {
  display: flex;
  align-items: center;
  height: 30px;
  border-top: 1px solid #3f5064;
  background: linear-gradient(#a4b4c6 0 1px, #8195ab 2px);
  color: #fff;
  font: 12px/16px Roboto, sans-serif;
}
.start { width: 36px; height: 36px; margin-left: 9px; z-index: 1; }
.quick { width: 20px; height: 20px; }
.ie { margin: 0 13px 0 27px; }
.media { margin: 0 14px 0 13px; }
.task {
  width: 160px;
  height: 28px;
  margin-right: 1px;
  display: flex;
  align-items: center;
  gap: 6px;
  padding: 0 8px;
  border: 1px solid #4c5e74;
  border-radius: 2px;
  box-shadow: inset 0 0 0 1px #b4c2d0;
  background: linear-gradient(#9dafc0, #8798ac 50%, #74879d 51%, #8598ad);
}
.task.current { background: linear-gradient(#c6d0da, #b0bdca 50%, #a2b1c1 51%, #b4c1ce); box-shadow: inset 0 0 0 1px #dde4ea; }
.tray { display: flex; align-items: center; gap: 8px; margin-left: auto; }
.tray svg { width: 16px; height: 16px; }
.lang { margin: -6px 7px 0 0; }
.tray time { margin: 0 25px 0 23px; }
.desktop { width: 14px; height: 29px; border: 1px solid #35465a; background: linear-gradient(#8094a8, #4f6072 50%, #8094a8); }

.dialog {
  position: absolute;
  left: 220px;
  top: 293px;
  width: 784px;
  display: flex;
  flex-direction: column;
  border: solid #3fc0e0;
  border-width: 1px 1px 1px 0;
  border-top-color: #e8f2fa;
  border-radius: 6px 6px 0 0;
  background: #f0f0f0;
  box-shadow: inset 1px 0 #d0e0f0, inset -1px -1px #b9d1ea;
  font: 11px/14px "Liberation Sans", sans-serif;
}
.dialog header {
  display: flex;
  align-items: center;
  gap: 2px;
  height: 23px;
  padding: 0 3px 0 6px;
  border-radius: 5px 5px 0 0;
  background: linear-gradient(#98b4d2, #bad2ea);
  font: 12px/16px Roboto, sans-serif;
}
.dialog header h2 { flex: 1; }
.dialog header button { width: 31px; height: 17px; display: grid; place-items: center; border: 1px solid #5f7c9c; border-radius: 2px; }
.dialog header svg { width: 12px; height: 12px; }
.d-help { background: linear-gradient(#c0d4e8 50%, #9cb6d2 51%, #b4cce4); font-weight: bold; color: #3f4a58; }
.dialog header .d-close { border-color: #5c1c1c; background: linear-gradient(#e0a094 45%, #b8402c 50%, #d07860); }
.d-tabs { display: flex; align-items: flex-end; margin: 7px 10px 0; height: 20px; }
.d-tabs button { height: 17px; padding: 0 4px; border: 1px solid #898c95; border-bottom: 0; background: linear-gradient(#f4f4f4 50%, #dcdcdc); }
.d-tabs .active { height: 21px; margin-bottom: -1px; padding: 0 6px; background: #fff; z-index: 1; }
.d-page { margin: 0 9px 0 8px; padding: 9px 8px 10px 11px; border: 1px solid #898c95; box-shadow: inset 0 0 0 1px #fff; }
.d-list { height: 305px; border: 1px solid #828790; background: #fff; }
.d-list th { height: 24px; padding: 2px 0 0 7px; }
.d-list td { height: 20px; padding-left: 3px; border-bottom: 1px solid #c8c8c8; border-right: 1px solid #c8c8c8; }
.d-list tbody tr:nth-child(odd) { background: #ebebeb; }
.d-list td svg { display: inline-block; width: 16px; height: 16px; margin-right: 4px; vertical-align: -4px; }
.par-letter { font: bold 8px "DejaVu Sans Condensed", sans-serif; }
.par-ab { fill: #6c5c08; }
.par-num { font-size: 6px; fill: #103c74; }
.d-buttons { display: flex; justify-content: flex-end; gap: 8px; padding: 8px 175px 8px 0; }
.d-buttons button { width: 73px; height: 22px; border: 1px solid #707070; border-radius: 3px; background: linear-gradient(#f2f2f2 50%, #dddddd 51%, #cfcfcf); box-shadow: inset 0 0 0 1px #fcfcfc; }
.d-buttons .default { border-color: #3c7fb1; box-shadow: inset 0 0 0 1px #40c8f0; }
```

FILE: chart.js
```js
// Each bar: x, high, body top, body bottom, low, bearish flag (plot pixels).
const bars = [
  [1, 84, 84, 94, 95, 0], [5, 75, 80, 92, 94, 0], [9, 75, 80, 82, 85, 0], [13, 48, 57, 82, 84, 0],
  [17, 51, 56, 63, 66, 1], [21, 56, 59, 62, 66, 0], [25, 54, 59, 65, 69, 1], [29, 61, 64, 67, 70, 0],
  [33, 63, 64, 65, 78, 1], [37, 62, 65, 75, 77, 1], [41, 74, 75, 104, 116, 1], [45, 103, 104, 113, 128, 1],
  [49, 102, 112, 121, 138, 1], [53, 108, 118, 138, 175, 1], [57, 34, 66, 138, 168, 0], [61, 54, 63, 137, 159, 1],
  [65, 119, 138, 138, 165, 1], [69, 125, 138, 171, 192, 1], [73, 112, 113, 171, 183, 0], [77, 110, 114, 119, 127, 1],
  [81, 63, 89, 118, 122, 0], [85, 67, 71, 90, 104, 0], [89, 56, 64, 71, 78, 0], [93, 57, 58, 64, 69, 0],
  [97, 57, 58, 61, 73, 0], [101, 57, 57, 68, 71, 1], [105, 59, 67, 71, 72, 1], [109, 65, 69, 71, 77, 0],
  [113, 61, 68, 69, 76, 0], [117, 66, 68, 81, 85, 1], [121, 77, 80, 91, 92, 1], [125, 84, 91, 96, 97, 1],
  [129, 88, 96, 100, 107, 1], [133, 68, 83, 101, 108, 0], [137, 78, 85, 88, 97, 1], [141, 67, 87, 110, 120, 1],
  [145, 108, 110, 127, 134, 1], [149, 69, 74, 127, 128, 0], [153, 69, 73, 79, 96, 1], [157, 77, 79, 102, 105, 1],
  [161, 92, 102, 103, 117, 1], [165, 99, 102, 120, 151, 1], [169, 112, 119, 124, 134, 1], [173, 104, 106, 124, 128, 0],
  [177, 83, 104, 106, 109, 0], [181, 96, 105, 300, 300, 1],
  [797, 540, 541, 554, 555, 0], [801, 541, 542, 550, 555, 1], [805, 542, 549, 562, 572, 1],
  [809, 549, 553, 562, 567, 0], [813, 553, 553, 638, 650, 1]
];
const days = [12, 108, 204, 300, 384, 396, 492, 588, 684, 780, 876];
const svg = document.querySelector(".candles");

function add(name, cls, attrs) {
  const el = document.createElementNS("http://www.w3.org/2000/svg", name);
  el.setAttribute("class", cls);
  for (const key in attrs) el.setAttribute(key, attrs[key]);
  svg.appendChild(el);
}

days.forEach(x => add("line", "grid", { x1: x + 0.5, x2: x + 0.5, y1: 0, y2: "100%" }));
add("line", "bid", { x1: 0, x2: "100%", y1: 637.5, y2: 637.5 });
add("path", "mark", { d: "M813 0h10l-5 5z" });
bars.forEach(([x, high, top, bottom, low, bear]) => {
  add("line", "bar", { x1: x - 0.5, x2: x - 0.5, y1: high, y2: low });
  add("rect", bear ? "bar bear" : "bar", { x: x - 1.5, y: top + 0.5, width: 2, height: Math.max(bottom - top - 1, 0.1) });
});
```
